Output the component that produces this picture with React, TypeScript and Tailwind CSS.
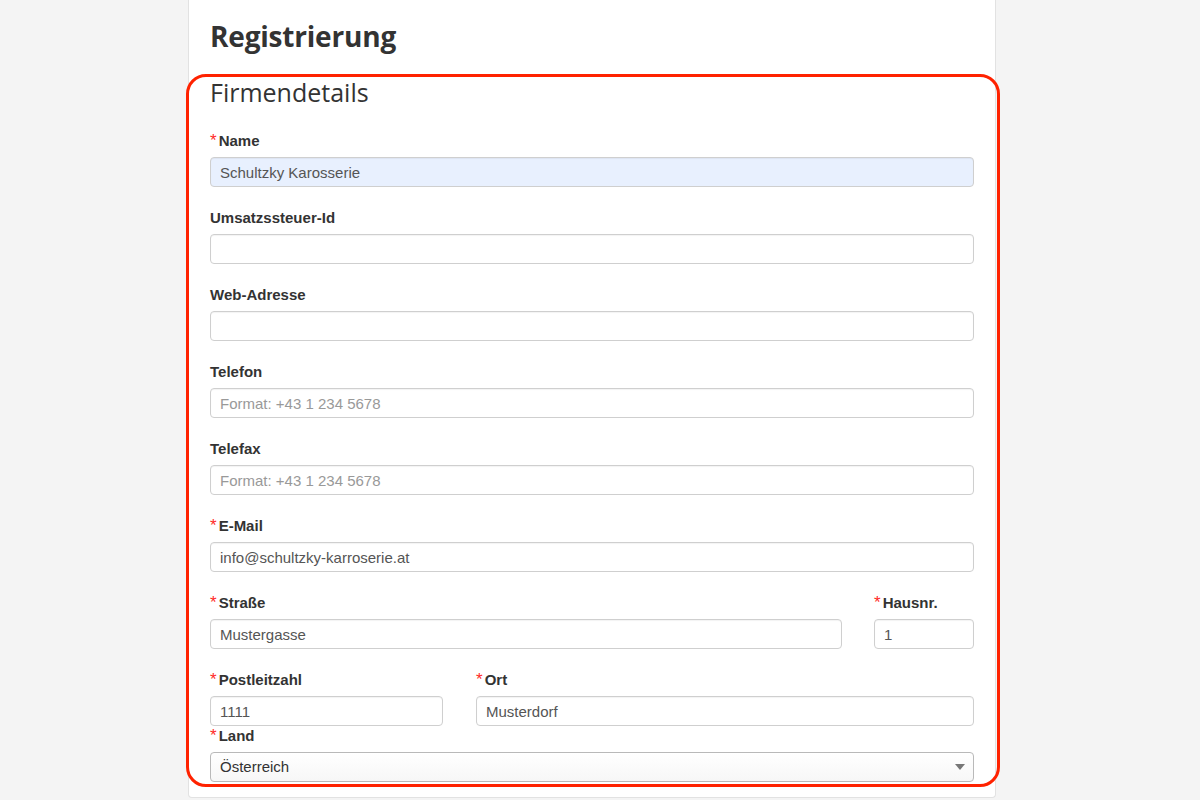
import React from "react";

const font = { fontFamily: '"Liberation Sans", Arial, sans-serif' };

function Label({ text, required }: { text: string; required?: boolean }) {
  return (
    <label className="flex items-baseline h-[20px] mb-[6px] text-[15px] font-bold text-[#333] leading-[20px]">
      {required && <span className="text-[#ff2a2a] mr-[2px] font-normal text-[17px]">*</span>}
      {text}
    </label>
  );
}

function Field({
  label,
  required,
  value,
  placeholder,
  autofill,
  className = "mb-[21px]",
}: {
  label: string;
  required?: boolean;
  value?: string;
  placeholder?: string;
  autofill?: boolean;
  className?: string;
}) {
  return (
    <div className={className}>
      <Label text={label} required={required} />
      <input
        readOnly
        value={value ?? ""}
        placeholder={placeholder}
        className={`block w-full h-[30px] rounded-[4px] border border-[#cfcfcf] px-[9px] text-[15px] text-[#555] placeholder:text-[#999] outline-none shadow-[inset_0_1px_1px_rgba(0,0,0,0.05)] ${
          autofill ? "bg-[#e8f0fe]" : "bg-white"
        }`}
        style={font}
      />
    </div>
  );
}

export default function App() {
  return (
    <div className="min-h-[800px] bg-[#f4f4f4] overflow-hidden" style={font}>
      <div className="relative ml-[188px] w-[808px] h-[798px] bg-white border border-t-0 border-[#e2e2e2] rounded-b-[4px] px-[21px]">
        <h1
          className="pt-[16px] text-[28px] font-bold text-[#333] leading-[40px] tracking-[-0.2px]"
          style={{ fontFamily: '"Open Sans", sans-serif' }}
        >
          Registrierung
        </h1>
        <h2
          className="mt-[21px] text-[25px] text-[#333] leading-[30px]"
          style={{ fontFamily: '"Open Sans", sans-serif' }}
        >
          Firmendetails
        </h2>

        <div className="mt-[24px]">
          <Field label="Name" required value="Schultzky Karosserie" autofill />
          <Field label="Umsatzssteuer-Id" />
          <Field label="Web-Adresse" />
          <Field label="Telefon" placeholder="Format: +43 1 234 5678" />
          <Field label="Telefax" placeholder="Format: +43 1 234 5678" />
          <Field label="E-Mail" required value="info@schultzky-karroserie.at" />

          <div className="grid grid-cols-[632px_100px] gap-x-[32px]">
            <Field label="Straße" required value="Mustergasse" />
            <Field label="Hausnr." required value="1" />
          </div>

          <div className="grid grid-cols-[233px_498px] gap-x-[33px]">
            <Field label="Postleitzahl" required value="1111" className="mb-0" />
            <Field label="Ort" required value="Musterdorf" className="mb-0" />
          </div>

          <div>
            <Label text="Land" required />
            <div className="relative h-[30px] rounded-[4px] border border-[#b9b9b9] bg-gradient-to-b from-white to-[#f7f7f7] flex items-center px-[9px] text-[15px] leading-[28px] text-[#333]">
              Österreich
              <svg className="absolute right-[8px] top-[11px]" width="10" height="6" viewBox="0 0 10 6">
                <path d="M0 0 L10 0 L5 6 Z" fill="#777" />
              </svg>
            </div>
          </div>
        </div>

        {/* red annotation frame */}
        <div className="absolute left-[-3px] top-[74px] w-[814px] h-[713px] rounded-[20px] border-[3px] border-[#ff2200] pointer-events-none" />
      </div>
    </div>
  );
}
